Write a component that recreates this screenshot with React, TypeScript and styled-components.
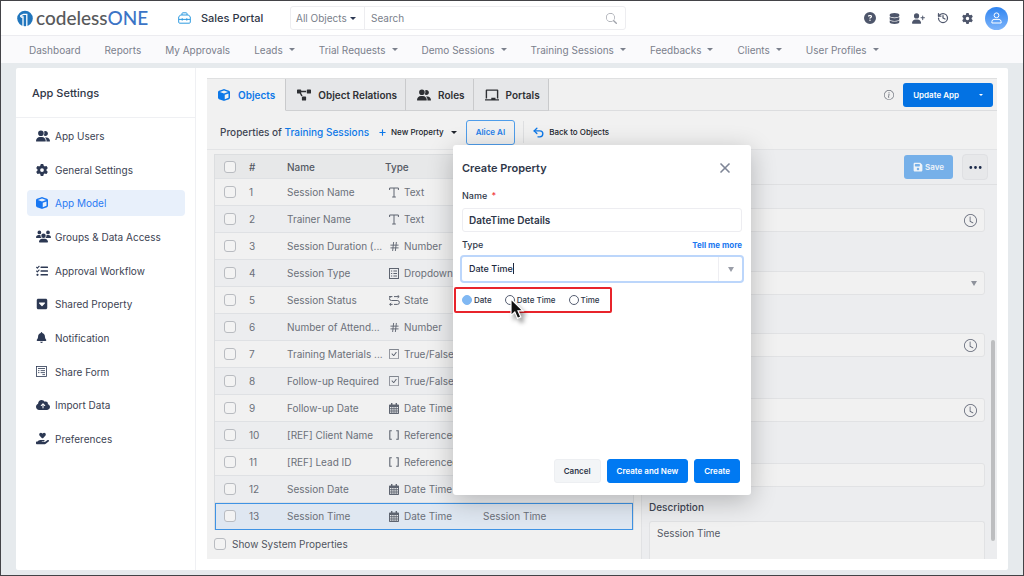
import React from "react";
import styled, { createGlobalStyle, css } from "styled-components";
import {
  FaCircleQuestion,
  FaDatabase,
  FaUserPlus,
  FaGear,
  FaCube,
  FaUserGroup,
  FaUsers,
  FaSquareCaretDown,
  FaBell,
  FaCloudArrowUp,
  FaHandHoldingHeart,
  FaFloppyDisk,
} from "react-icons/fa6";
import { FaProjectDiagram, FaTasks, FaChalkboard } from "react-icons/fa";
import { BsClock, BsCheckSquare, BsThreeDots, BsInfoCircle, BsSearch } from "react-icons/bs";
import { Hash, History, Plus, Undo2, X } from "lucide-react";

const GlobalStyle = createGlobalStyle`
  *, *::before, *::after { box-sizing: border-box; }
  body {
    margin: 0;
    font-family: Inter, "Liberation Sans", sans-serif;
    font-size: 10px;
    line-height: 14px;
    color: #3a4254;
    background: #e6eaed;
  }
  button, input, select, textarea { font: inherit; color: inherit; margin: 0; }
  button { cursor: pointer; }
  a { color: inherit; text-decoration: none; }
`;

const Page = styled.div`
  min-height: 100vh;
  display: flex;
  flex-direction: column;
  border: 1px solid #434347;
`;

const Header = styled.header`
  display: flex;
  align-items: center;
  height: 35px;
  padding: 0 15px 0 16px;
  background: #fff;
  border-bottom: 1px solid #ececf0;
`;

const Brand = styled.a`
  display: flex;
  align-items: center;
  gap: 3px;
  width: 161px;
  font-family: Lato, Inter, sans-serif;
  font-size: 19px;
  line-height: 20px;
  font-weight: 500;
  color: #58595b;
  white-space: nowrap;
  em { font-style: normal; color: #3b74c6; }
`;

const PortalLink = styled.a`
  display: flex;
  align-items: center;
  gap: 10px;
  width: 112px;
  font-size: 11px;
  font-weight: 500;
  color: #2f3646;
`;

const SearchGroup = styled.form`
  display: flex;
  align-items: center;
  flex: 0 1 336px;
  height: 24px;
  border: 1px solid #ededf0;
  border-radius: 3px;
  color: #7a7f8b;
`;

const Scope = styled.button`
  display: flex;
  align-items: center;
  gap: 3px;
  width: 74px;
  height: 22px;
  padding: 0 0 0 5px;
  border: 0;
  border-right: 1px solid #ededf0;
  background: none;
  white-space: nowrap;
  span { color: #2c3853; }
`;

const SearchInput = styled.input`
  flex: 1;
  min-width: 0;
  border: 0;
  padding: 0 6px;
  background: none;
  outline: none;
  &::placeholder { color: #7a7f8b; opacity: 1; }
`;

const SearchButton = styled.button`
  display: flex;
  padding: 0 8px;
  border: 0;
  background: none;
  color: #a0a3ab;
`;

const HeaderActions = styled.div`
  display: flex;
  align-items: center;
  gap: 12px;
  margin-left: auto;
  color: #4e566b;
`;

const IconButton = styled.button`
  display: flex;
  justify-content: center;
  min-width: 12px;
  padding: 0;
  border: 0;
  background: none;
  color: inherit;
`;

const Avatar = styled.button`
  display: flex;
  align-items: center;
  justify-content: center;
  width: 23px;
  height: 23px;
  padding: 0;
  border: 0;
  border-radius: 50%;
  background: linear-gradient(#2f84f0, #7db4fa);
  color: #fff;
`;

const Nav = styled.nav`
  display: flex;
  align-items: center;
  gap: 24px;
  height: 27px;
  padding-left: 28px;
  background: #fafafc;
  color: #7b808c;
  white-space: nowrap;
`;

const NavLink = styled.a`
  display: flex;
  align-items: center;
  gap: 6px;
`;

const Caret = styled.span<{ $size?: number }>`
  width: 0;
  height: 0;
  border: ${(p) => p.$size ?? 3}px solid transparent;
  border-top-color: currentColor;
  border-bottom: 0;
`;

const Card = styled.div`
  flex: 1;
  display: flex;
  margin: 5px 15px 5px;
  background: #fff;
  border-radius: 2px;
`;

const Sidebar = styled.aside`
  flex: 0 0 180px;
  border-right: 1px solid #eff0f3;
`;

const SidebarTitle = styled.h1`
  display: flex;
  align-items: center;
  height: 50px;
  margin: 0;
  padding-left: 16px;
  border-bottom: 1px solid #eff0f3;
  font-size: 11px;
  font-weight: 500;
  color: #2f3646;
`;

const SideList = styled.div`
  display: flex;
  flex-direction: column;
  justify-content: space-between;
  height: 334px;
  padding: 5px 10px 0 11px;
`;

const SideLink = styled.a<{ $active?: boolean }>`
  display: grid;
  grid-template-columns: 19px 1fr;
  align-items: center;
  height: 26px;
  padding-left: 9px;
  border-radius: 4px;
  white-space: nowrap;
  color: ${(p) => (p.$active ? "#2b7bf3" : "#3c4353")};
  background: ${(p) => (p.$active ? "#e8f0fb" : "transparent")};
  svg { color: ${(p) => (p.$active ? "#1877f2" : "#2c3853")}; }
`;

const Main = styled.main`
  position: relative;
  flex: 1;
  min-width: 0;
  display: flex;
  flex-direction: column;
  margin: 10px 11px 11px;
  background: #f1f1f1;
`;

const TabBar = styled.div`
  display: flex;
  height: 33px;
  border-bottom: 1px solid #dcdddf;
  border-top: 1px solid #dfe0e1;
`;

const Tab = styled.button<{ $active?: boolean }>`
  display: flex;
  align-items: center;
  gap: ${(p) => (p.$active ? 8 : 7)}px;
  padding: 0 ${(p) => (p.$active ? 10 : 8)}px 0 11px;
  margin-bottom: -1px;
  border: 0;
  border-right: 1px solid #c9cacc;
  border-bottom: 1px solid ${(p) => (p.$active ? "#f1f1f1" : "#cfd0d2")};
  background: ${(p) => (p.$active ? "#f1f1f1" : "#e6e7e9")};
  color: ${(p) => (p.$active ? "#0d78e8" : "#2e3034")};
  font-weight: 600;
  white-space: nowrap;
`;

const TabActions = styled.div`
  display: flex;
  align-items: center;
  gap: 8px;
  margin-left: auto;
  padding-right: 4px;
  color: #6c717b;
`;

const UpdateGroup = styled.div`
  display: flex;
  align-items: center;
  height: 24px;
  border-radius: 3px;
  background: #0372e3;
  color: #fff;
`;

const UpdateButton = styled.button`
  display: flex;
  align-items: center;
  height: 24px;
  padding: 0 10px;
  border: 0;
  background: none;
  color: #fff;
  font-size: 8px;
  font-weight: 600;
`;

const Toolbar = styled.div`
  display: flex;
  align-items: center;
  height: 38px;
  padding: 4px 0 0 13px;
  color: #2e3238;
  font-size: 8px;
  font-weight: 500;
  white-space: nowrap;
`;

const Subject = styled.h2`
  margin: 0 9px 0 0;
  font-size: 10px;
  font-weight: 500;
  color: #3f4654;
  a { color: #0d78e8; }
`;

const ToolButton = styled.button`
  display: flex;
  align-items: center;
  gap: 4px;
  padding: 0;
  border: 0;
  background: none;
  font-weight: 500;
  color: #20242c;
  span { margin-left: 3px; }
`;

const AliceButton = styled.button`
  height: 25px;
  margin: 0 8px 0 9px;
  padding: 0 9px;
  border: 1px solid #4f9dea;
  border-radius: 3px;
  background: none;
  color: #1f80ea;
  font-weight: 600;
`;

const ToolDivider = styled.span`
  width: 1px;
  height: 22px;
  margin-right: 8px;
  background: #dedfe1;
`;

const Workspace = styled.div`
  flex: 1;
  display: flex;
  border-top: 1px solid #e3e4e6;
`;

const TablePane = styled.div`
  flex: 0 0 434px;
  padding: 4px 7px 0;
`;

const Table = styled.table`
  width: 100%;
  table-layout: fixed;
  border-collapse: separate;
  border-spacing: 0;
  border-left: 1px solid #dcdee0;
  border-right: 1px solid #dcdee0;
  th, td {
    padding: 0;
    text-align: left;
    font-weight: 400;
    border-bottom: 1px solid #dfe1e4;
    white-space: nowrap;
    vertical-align: middle;
  }
  th {
    height: 25px;
    font-weight: 500;
    color: #555a64;
    background: #e7e8e9;
    border-top: 1px solid #dcdee0;
  }
`;

const Row = styled.tr<{ $selected?: boolean }>`
  height: 27px;
  color: #6b7079;
  &:nth-child(even) td { background: #ecedef; }
  ${(p) =>
    p.$selected &&
    css`
      && td {
        background: #dfe7f1;
        border-bottom: 1px solid #3f93e4;
        box-shadow: inset 0 1px #3f93e4;
      }
      && td:first-child { box-shadow: inset 1px 1px #3f93e4; }
      && td:last-child { box-shadow: inset -1px 1px #3f93e4; }
    `}
`;

const TypeCell = styled.span`
  display: grid;
  grid-template-columns: 15px 1fr;
  align-items: center;
  padding-left: 4px;
  svg { color: #5e6470; }
`;

const Tick = styled.input`
  appearance: none;
  display: block;
  flex: none;
  width: 12px;
  height: 12px;
  border: 1px solid #b9bcc1;
  border-radius: 3px;
  background: #f3f3f3;
`;

const CellTick = styled(Tick)`
  margin-left: 9px;
`;

const SystemLabel = styled.label`
  display: flex;
  align-items: center;
  gap: 6px;
  height: 28px;
  color: #50555f;
`;

const DetailPane = styled.section`
  flex: 1;
  min-width: 0;
  display: flex;
  flex-direction: column;
  border-left: 1px solid #e1e2e4;
  background: #ecedef;
`;

const DetailBar = styled.div`
  display: flex;
  align-items: center;
  justify-content: flex-end;
  gap: 9px;
  height: 35px;
  padding-right: 9px;
  border-bottom: 1px solid #dfe0e2;
`;

const SaveButton = styled.button`
  display: flex;
  align-items: center;
  gap: 2px;
  height: 24px;
  padding: 0 9px;
  border: 0;
  border-radius: 3px;
  background: #76b0e9;
  color: #eef3f8;
  font-size: 8px;
  font-weight: 600;
`;

const MoreButton = styled.button`
  display: flex;
  align-items: center;
  justify-content: center;
  width: 26px;
  height: 26px;
  padding: 0;
  border: 1px solid #dfe0e3;
  border-radius: 4px;
  background: #e7e8ea;
  color: #1c2a4a;
`;

const DetailBody = styled.div`
  flex: 1;
  display: flex;
`;

const DetailForm = styled.div`
  flex: 1;
  min-width: 0;
  display: flex;
  flex-direction: column;
  padding: 23px 6px 0 7px;
`;

const Field = styled.div<{ $gap: number }>`
  display: flex;
  align-items: center;
  height: 24px;
  margin-bottom: ${(p) => p.$gap}px;
  padding-right: 7px;
  border: 1px solid #e1e2e4;
  border-radius: 3px;
  background: #f1f1f1;
  color: #5e6474;
  input, select {
    flex: 1;
    min-width: 0;
    border: 0;
    background: none;
    appearance: none;
    outline: none;
  }
  select + svg { color: #8e929b; }
`;

const DescriptionLabel = styled.label`
  margin-bottom: 6px;
  line-height: 16px;
  color: #3f4654;
  font-weight: 500;
`;

const Description = styled.textarea`
  display: block;
  width: 100%;
  flex: 1;
  min-height: 38px;
  height: 38px;
  padding: 4px 7px;
  border: 1px solid #e1e2e4;
  border-bottom: 0;
  border-radius: 3px 3px 0 0;
  background: #f1f1f1;
  color: #555a66;
  outline: none;
  overflow: hidden;
  resize: none;
`;

const ScrollRail = styled.div`
  display: flex;
  align-items: flex-end;
  width: 6px;
  padding-bottom: 18px;
`;

const ScrollThumb = styled.div`
  width: 4px;
  height: 201px;
  border-radius: 2px;
  background: #bdbec0;
`;

const Overlay = styled.div`
  position: absolute;
  inset: 0;
  display: flex;
  justify-content: center;
  align-items: flex-start;
  padding-top: 67px;
`;

const Dialog = styled.div`
  display: flex;
  flex-direction: column;
  width: 298px;
  min-height: 350px;
  padding: 11px 9px 12px;
  border-radius: 3px;
  background: #fff;
  box-shadow: 0 6px 26px rgba(0, 0, 0, 0.24);
  color: #2f3749;
  font-size: 9px;
`;

const DialogHeader = styled.div`
  display: flex;
  align-items: center;
  justify-content: space-between;
  height: 24px;
  margin-bottom: 9px;
  padding-right: 9px;
  h2 { margin: 0; font-size: 11px; font-weight: 600; }
  button { color: #7e8596; }
`;

const LabelRow = styled.div`
  display: flex;
  justify-content: space-between;
  height: 14px;
  margin-bottom: 5px;
  font-weight: 500;
  i { margin-left: 2px; font-style: normal; color: #f0383f; }
  a { color: #1b78f0; font-size: 8px; font-weight: 700; }
`;

const NameInput = styled.input`
  width: 100%;
  height: 24px;
  margin-bottom: 6px;
  padding: 0 6px;
  border: 1px solid #ededf1;
  border-radius: 3px;
  outline: none;
  font-size: 10px;
  font-weight: 600;
`;

const Combo = styled.div`
  display: flex;
  height: 24px;
  margin-bottom: 6px;
  border-radius: 2px;
  box-shadow: 0 0 0 2px #bcd6fb;
  input {
    flex: 1;
    min-width: 0;
    padding: 0 7px;
    border: 0;
    background: none;
    outline: none;
    font-weight: 500;
    color: #20283c;
  }
  button {
    display: flex;
    align-items: center;
    justify-content: center;
    width: 24px;
    padding: 0;
    border: 0;
    border-left: 1px solid #eeeef2;
    background: none;
    color: #9a9ea8;
  }
`;

const ComboText = styled.div`
  position: relative;
  flex: 1;
  display: flex;
`;

const TextCaret = styled.span`
  position: absolute;
  left: 51px;
  top: 6px;
  width: 1px;
  height: 11px;
  background: #20283c;
`;

const RadioGroup = styled.div`
  align-self: flex-start;
  display: flex;
  align-items: center;
  gap: 13px;
  height: 26px;
  margin: 0 -8px;
  padding: 0 10px 0 6px;
  border: 2px solid #e8242b;
  border-radius: 2px;
  font-size: 8px;
  font-weight: 500;
  label {
    position: relative;
    display: flex;
    align-items: center;
    gap: 2px;
    white-space: nowrap;
  }
`;

const Radio = styled.input`
  appearance: none;
  width: 10px;
  height: 10px;
  border: 1px solid #565e72;
  border-radius: 50%;
  background: #fff;
  &:checked { background: #80b8f3; border-color: #80b8f3; }
`;

const Pointer = styled.svg`
  position: absolute;
  left: 5px;
  top: 5px;
  overflow: visible;
  filter: drop-shadow(3px 4px 2px rgba(0, 0, 0, 0.4));
`;

const DialogFooter = styled.div`
  display: flex;
  justify-content: flex-end;
  gap: 6px;
  margin-top: auto;
  padding-right: 2px;
`;

const DialogButton = styled.button<{ $primary?: boolean }>`
  height: 24px;
  padding: 0 9px;
  border: 1px solid ${(p) => (p.$primary ? "#0079f2" : "#edeff2")};
  border-radius: 3px;
  background: ${(p) => (p.$primary ? "#0079f2" : "#f3f5f7")};
  color: ${(p) => (p.$primary ? "#fff" : "#2f3749")};
  font-size: 8px;
  font-weight: 600;
  white-space: nowrap;
`;

const LogoMark = () => (
  <svg width="16" height="17" viewBox="0 0 16 17" aria-hidden="true">
    <circle cx="8" cy="8.5" r="7.8" fill="#2176bd" />
    <path d="M3.8 7H6V16M3.8 7V5.6L6.6 4.4H9.8V17" fill="none" stroke="#fff" strokeWidth="1.3" />
  </svg>
);

const ToolboxIcon = () => (
  <svg width="13" height="12" viewBox="0 0 13 12" fill="none" stroke="#2f9be0" strokeWidth="1" aria-hidden="true">
    <path d="M4 3V1.6Q4 .8 4.8 .8H8.2Q9 .8 9 1.6V3" />
    <path d="M2.4 3H10.6L12.3 5V10.2Q12.3 11.2 11.3 11.2H1.7Q.7 11.2 .7 10.2V5Z" />
    <path d="M.7 7.4H12.3M4.2 6.2V8.6M8.8 6.2V8.6" />
  </svg>
);

const PersonIcon = () => (
  <svg width="11" height="12" viewBox="0 0 11 12" fill="none" stroke="currentColor" strokeWidth="1" aria-hidden="true">
    <circle cx="5.5" cy="3.3" r="2.4" />
    <path d="M.9 11V9.6Q.9 7.6 3 7.4H8Q10.1 7.6 10.1 9.6V11Z" />
  </svg>
);

const FormIcon = () => (
  <svg width="11" height="11" viewBox="0 0 11 11" fill="none" stroke="currentColor" strokeWidth="0.8" aria-hidden="true">
    <rect x=".5" y=".5" width="10" height="10" />
    <path d="M2 2.5H9M2 4.6H3.4M4.6 4.6H9M4.6 6.6H9M2 6.6H3.4M6.4 8.6H9" />
  </svg>
);

const LetterTIcon = () => (
  <svg width="10" height="11" viewBox="0 0 10 11" fill="none" stroke="currentColor" strokeWidth="1" aria-hidden="true">
    <path d="M.6 3V1H9.4V3M5 1V10M3.2 10H6.8" />
  </svg>
);

const ListBoxIcon = () => (
  <svg width="10" height="11" viewBox="0 0 10 11" fill="none" stroke="currentColor" strokeWidth="1" aria-hidden="true">
    <rect x=".5" y=".5" width="9" height="10" />
    <path d="M2 3H3.2M4.4 3H8M2 5.5H3.2M4.4 5.5H8M2 8H3.2M4.4 8H8" />
  </svg>
);

const StateIcon = () => (
  <svg width="11" height="11" viewBox="0 0 11 11" fill="none" stroke="currentColor" strokeWidth="1" aria-hidden="true">
    <path d="M0 1.6H3.4M5 1.6H9.8M8.6 .2L10.2 1.6L8.6 3M8.6 5.5H2.4A1.9 1.9 0 0 1 2.4 1.6" />
    <path d="M8.4 5.5A1.9 1.9 0 0 1 8.4 9.4H5M3.6 9.4H.6M2.2 8L.7 9.4L2.2 10.8" />
  </svg>
);

const CalendarGridIcon = () => (
  <svg width="10" height="11" viewBox="0 0 10 11" aria-hidden="true">
    <path d="M2 0H3.4V1.4H6.6V0H8V1.4H9.2Q10 1.4 10 2.2V10.2Q10 11 9.2 11H.8Q0 11 0 10.2V2.2Q0 1.4 .8 1.4H2Z" fill="currentColor" />
    <path d="M1 4.6H9M1 6.9H9M1 9.2H9" stroke="#eff0f1" strokeWidth="1.2" strokeDasharray="1.4 0.8" />
  </svg>
);

const BracketsIcon = () => (
  <svg width="10" height="10" viewBox="0 0 10 10" fill="none" stroke="currentColor" strokeWidth="1.1" aria-hidden="true">
    <path d="M2.8 .8H.8V9.2H2.8M7.2 .8H9.2V9.2H7.2" />
  </svg>
);

const DownTriangle = () => (
  <svg width="6" height="5" viewBox="0 0 6 5" aria-hidden="true">
    <path d="M0 0H6L3 5Z" fill="currentColor" />
  </svg>
);

const navItems: [string, boolean][] = [
  ["Dashboard", false],
  ["Reports", false],
  ["My Approvals", false],
  ["Leads", true],
  ["Trial Requests", true],
  ["Demo Sessions", true],
  ["Training Sessions", true],
  ["Feedbacks", true],
  ["Clients", true],
  ["User Profiles", true],
];

const sideItems: [string, React.ReactNode][] = [
  ["App Users", <FaUserGroup size={14} />],
  ["General Settings", <FaGear size={12} />],
  ["App Model", <FaCube size={12} />],
  ["Groups & Data Access", <FaUsers size={15} />],
  ["Approval Workflow", <FaTasks size={12} />],
  ["Shared Property", <FaSquareCaretDown size={12} />],
  ["Notification", <FaBell size={11} />],
  ["Share Form", <FormIcon />],
  ["Import Data", <FaCloudArrowUp size={14} />],
  ["Preferences", <FaHandHoldingHeart size={13} />],
];

const typeIcons: Record<string, React.ReactNode> = {
  Text: <LetterTIcon />,
  Number: <Hash size={11} />,
  Dropdown: <ListBoxIcon />,
  State: <StateIcon />,
  "True/False": <BsCheckSquare size={10} />,
  "Date Time": <CalendarGridIcon />,
  Referenced: <BracketsIcon />,
};

const rows: [string, string, string?][] = [
  ["Session Name", "Text"],
  ["Trainer Name", "Text"],
  ["Session Duration (...", "Number"],
  ["Session Type", "Dropdown"],
  ["Session Status", "State"],
  ["Number of Attend...", "Number"],
  ["Training Materials ...", "True/False"],
  ["Follow-up Required", "True/False"],
  ["Follow-up Date", "Date Time"],
  ["[REF] Client Name", "Referenced"],
  ["[REF] Lead ID", "Referenced"],
  ["Session Date", "Date Time"],
  ["Session Time", "Date Time", "Session Time"],
];

export default function App() {
  return (
    <Page>
      <GlobalStyle />
      <Header>
        <Brand href="#">
          <LogoMark />
          <span>codeless<em>ONE</em></span>
        </Brand>
        <PortalLink href="#"><ToolboxIcon />Sales Portal</PortalLink>
        <SearchGroup>
          <Scope type="button">All Objects <Caret /></Scope>
          <SearchInput aria-label="Search" placeholder="Search" />
          <SearchButton type="button" aria-label="Search"><BsSearch size={11} /></SearchButton>
        </SearchGroup>
        <HeaderActions>
          <IconButton aria-label="Help"><FaCircleQuestion size={12} /></IconButton>
          <IconButton aria-label="Data"><FaDatabase size={11} /></IconButton>
          <IconButton aria-label="Invite"><FaUserPlus size={13} /></IconButton>
          <IconButton aria-label="History"><History size={12} strokeWidth={2.5} /></IconButton>
          <IconButton aria-label="Settings"><FaGear size={11} /></IconButton>
          <Avatar aria-label="Account"><PersonIcon /></Avatar>
        </HeaderActions>
      </Header>
      <Nav>
        {navItems.map(([label, menu]) => (
          <NavLink href="#" key={label}>{label}{menu && <Caret />}</NavLink>
        ))}
      </Nav>
      <Card>
        <Sidebar>
          <SidebarTitle>App Settings</SidebarTitle>
          <SideList>
            {sideItems.map(([label, icon]) => (
              <SideLink href="#" key={label} $active={label === "App Model"}>{icon}{label}</SideLink>
            ))}
          </SideList>
        </Sidebar>
        <Main>
          <TabBar>
            <Tab $active><FaCube size={12} />Objects</Tab>
            <Tab><FaProjectDiagram size={14} />Object Relations</Tab>
            <Tab><FaUserGroup size={14} />Roles</Tab>
            <Tab><FaChalkboard size={14} />Portals</Tab>
            <TabActions>
              <IconButton aria-label="Info"><BsInfoCircle size={10} /></IconButton>
              <UpdateGroup>
                <UpdateButton>Update App</UpdateButton>
                <UpdateButton aria-label="Update options"><Caret $size={2} /></UpdateButton>
              </UpdateGroup>
            </TabActions>
          </TabBar>
          <Toolbar>
            <Subject>Properties of <a href="#">Training Sessions</a></Subject>
            <ToolButton><Plus size={9} color="#0d78e8" strokeWidth={3} />New Property<Caret /></ToolButton>
            <AliceButton>Alice AI</AliceButton>
            <ToolDivider />
            <ToolButton><Undo2 size={13} color="#0d78e8" strokeWidth={2.5} />Back to Objects</ToolButton>
          </Toolbar>
          <Workspace>
            <TablePane>
              <Table>
                <colgroup>
                  <col width="34" /><col width="38" /><col width="98" /><col width="98" /><col />
                </colgroup>
                <thead>
                  <tr>
                    <th><CellTick type="checkbox" aria-label="Select all" /></th>
                    <th>#</th><th>Name</th><th>Type</th><th />
                  </tr>
                </thead>
                <tbody>
                  {rows.map(([name, type, note], i) => (
                    <Row key={name} $selected={i === 12}>
                      <td><CellTick type="checkbox" aria-label={name} /></td>
                      <td>{i + 1}</td>
                      <td>{name}</td>
                      <td><TypeCell>{typeIcons[type]}{type}</TypeCell></td>
                      <td>{note}</td>
                    </Row>
                  ))}
                </tbody>
              </Table>
              <SystemLabel><Tick type="checkbox" />Show System Properties</SystemLabel>
            </TablePane>
            <DetailPane>
              <DetailBar>
                <SaveButton><FaFloppyDisk size={10} />Save</SaveButton>
                <MoreButton aria-label="More"><BsThreeDots size={15} /></MoreButton>
              </DetailBar>
              <DetailBody>
                <DetailForm>
                  <Field $gap={39}><input aria-label="Time" /><BsClock size={13} /></Field>
                  <Field $gap={38}><select aria-label="Option" /><DownTriangle /></Field>
                  <Field $gap={41}><input aria-label="Minimum time" /><BsClock size={13} /></Field>
                  <Field $gap={41}><input aria-label="Maximum time" /><BsClock size={13} /></Field>
                  <Field $gap={12}><input aria-label="Value" /></Field>
                  <DescriptionLabel htmlFor="description">Description</DescriptionLabel>
                  <Description id="description" defaultValue="Session Time" />
                </DetailForm>
                <ScrollRail><ScrollThumb /></ScrollRail>
              </DetailBody>
            </DetailPane>
          </Workspace>
          <Overlay>
            <Dialog role="dialog" aria-labelledby="dialog-title">
              <DialogHeader>
                <h2 id="dialog-title">Create Property</h2>
                <IconButton aria-label="Close"><X size={16} strokeWidth={2.5} /></IconButton>
              </DialogHeader>
              <LabelRow><label htmlFor="name">Name <i>*</i></label></LabelRow>
              <NameInput id="name" defaultValue="DateTime Details" />
              <LabelRow><label htmlFor="type">Type</label><a href="#">Tell me more</a></LabelRow>
              <Combo>
                <ComboText>
                  <input id="type" defaultValue="Date Time" />
                  <TextCaret />
                </ComboText>
                <button aria-label="Open types"><DownTriangle /></button>
              </Combo>
              <RadioGroup role="radiogroup" aria-label="Format">
                <label><Radio type="radio" name="format" defaultChecked />Date</label>
                <label>
                  <Radio type="radio" name="format" />Date Time
                  <Pointer width="14" height="22" viewBox="0 0 14 22" aria-hidden="true">
                    <path d="M1 1V17.4L4.8 14L7.6 20.4L10.8 19L8 12.8H13Z" fill="#111" stroke="#fff" strokeWidth="1.2" />
                  </Pointer>
                </label>
                <label><Radio type="radio" name="format" />Time</label>
              </RadioGroup>
              <DialogFooter>
                <DialogButton>Cancel</DialogButton>
                <DialogButton $primary>Create and New</DialogButton>
                <DialogButton $primary>Create</DialogButton>
              </DialogFooter>
            </Dialog>
          </Overlay>
        </Main>
      </Card>
    </Page>
  );
}
